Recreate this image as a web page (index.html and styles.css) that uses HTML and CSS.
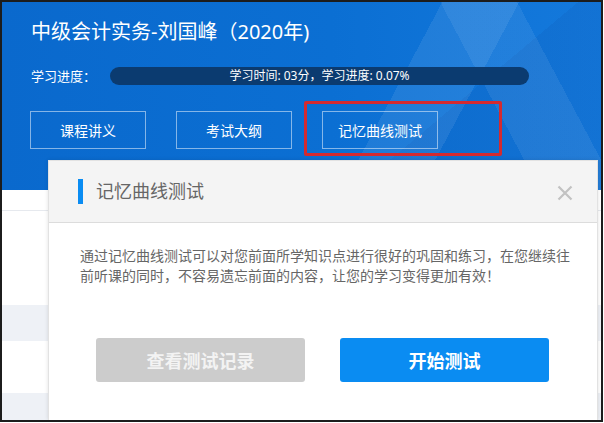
FILE: index.html
```html
<!DOCTYPE html>
<html lang="zh-CN">
<head>
<meta charset="utf-8">
<title>记忆曲线测试</title>
<link rel="stylesheet" href="styles.css">
</head>
<body>
<div class="frame">
  <header class="hero">
    <h1 class="title">中级会计实务-刘国峰（2020年)</h1>
    <div class="progress-row">
      <span class="progress-label">学习进度：</span>
      <div class="progress-bar">学习时间: 03分，学习进度: 0.07%</div>
    </div>
    <div class="tabs">
      <button class="tab">课程讲义</button>
      <button class="tab">考试大纲</button>
      <button class="tab">记忆曲线测试</button>
    </div>
    <div class="highlight"></div>
  </header>
  <div class="list">
    <div class="row row-top"></div>
    <div class="row row-a"></div>
    <div class="row row-gray row-b"></div>
    <div class="row row-c"></div>
    <div class="row row-gray row-d"></div>
  </div>
  <div class="modal">
    <div class="modal-head">
      <span class="modal-mark"></span>
      <span class="modal-title">记忆曲线测试</span>
      <svg class="modal-close" width="16" height="16" viewBox="0 0 16 16" aria-hidden="true">
        <path d="M1.5 1.5 L14.5 14.5 M14.5 1.5 L1.5 14.5" stroke="#c2c2c2" stroke-width="2.2" fill="none"/>
      </svg>
    </div>
    <div class="modal-body">
      <p class="modal-text">通过记忆曲线测试可以对您前面所学知识点进行很好的巩固和练习，在您继续往前听课的同时，不容易遗忘前面的内容，让您的学习变得更加有效！</p>
      <div class="modal-actions">
        <button class="btn btn-gray">查看测试记录</button>
        <button class="btn btn-blue">开始测试</button>
      </div>
    </div>
  </div>
</div>
</body>
</html>
```

FILE: styles.css
```css
* { box-sizing: border-box; }
html, body { margin: 0; padding: 0; background: #ffffff; }
body {
  font-family: "Noto Sans", "Noto Sans CJK SC", "Liberation Sans", sans-serif;
}
.frame {
  position: relative;
  width: 603px;
  height: 422px;
  border: 2px solid #1c1c1c;
  overflow: hidden;
  background: #ffffff;
}
.hero {
  position: relative;
  height: 188px;
  padding: 16px 0 0 28px;
  color: #ffffff;
  background:
    linear-gradient(118deg, transparent 63%, rgba(255,255,255,0.08) 63%, rgba(255,255,255,0.08) 74%, transparent 74%),
    linear-gradient(62deg, transparent 77%, rgba(255,255,255,0.07) 77%, rgba(255,255,255,0.07) 88%, transparent 88%),
    linear-gradient(140deg, transparent 70%, rgba(0,40,120,0.08) 70%),
    linear-gradient(90deg, #0a69cd 0%, #0b6fd3 55%, #1479dc 100%);
}
.title {
  margin: 0;
  font-size: 20px;
  line-height: 28px;
  font-weight: normal;
  padding-left: 1px;
}
.progress-row {
  display: flex;
  align-items: center;
  margin-top: 21px;
  height: 18px;
}
.progress-label {
  width: 80px;
  font-size: 13px;
  line-height: 18px;
  padding-left: 1px;
}
.progress-bar {
  width: 419px;
  height: 18px;
  border-radius: 9px;
  background: #0b3b70;
  font-size: 12px;
  line-height: 18px;
  text-align: center;
  color: #ffffff;
}
.tabs {
  display: flex;
  gap: 30px;
  margin-top: 26px;
}
.tab {
  width: 116px;
  height: 38px;
  border: 1px solid rgba(255,255,255,0.5);
  background: transparent;
  color: #ffffff;
  font-family: inherit;
  font-size: 14px;
  padding: 0;
}
.highlight {
  position: absolute;
  left: 302px;
  top: 99px;
  width: 198px;
  height: 55px;
  border: 3px solid #d42a30;
  border-radius: 2px;
}
.list { display: flex; flex-direction: column; }
.row { background: #ffffff; }
.row-top { height: 21px; border-bottom: 1px solid #e6e9ee; }
.row-a { height: 94px; }
.row-gray { background: #eef1f6; }
.row-b { height: 36px; }
.row-c { height: 52px; }
.row-d { height: 40px; }
.modal {
  position: absolute;
  left: 46px;
  top: 158px;
  width: 550px;
  bottom: 0;
  background: #ffffff;
  border: 1px solid #e2e2e2;
  border-bottom: none;
  box-shadow: 0 0 4px rgba(0,0,0,0.12);
}
.modal-head {
  display: flex;
  align-items: center;
  height: 62px;
  padding-left: 29px;
  background: #f4f4f4;
  border-bottom: 1px solid #dcdcdc;
}
.modal-mark {
  width: 5px;
  height: 25px;
  background: #0a8cf2;
}
.modal-title {
  margin-left: 13px;
  font-size: 18px;
  line-height: 25px;
  color: #666666;
}
.modal-close {
  margin-left: auto;
  margin-right: 24px;
  margin-top: 3px;
}
.modal-body {
  padding: 23px 22px 0 31px;
}
.modal-text {
  margin: 0;
  font-size: 14px;
  line-height: 20px;
  color: #666666;
}
.modal-actions {
  display: flex;
  gap: 35px;
  margin-top: 52px;
  padding-left: 16px;
}
.btn {
  width: 209px;
  height: 44px;
  border: none;
  border-radius: 3px;
  font-family: inherit;
  font-size: 18px;
  font-weight: bold;
  color: #ffffff;
  padding: 0;
}
.btn-gray { background: #cccccc; color: #f3f3f3; }
.btn-blue { background: #0a8cf2; }
```
